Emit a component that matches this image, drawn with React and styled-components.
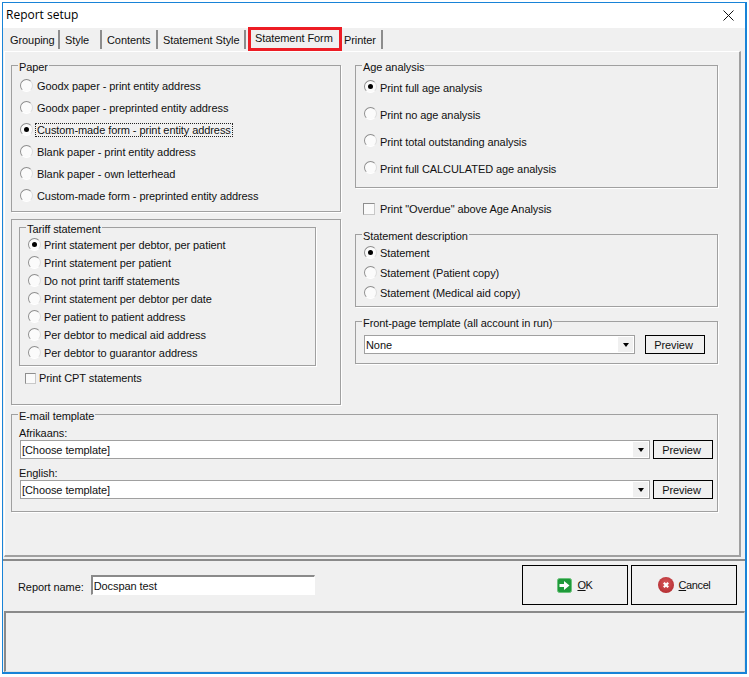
import styled, { createGlobalStyle } from "styled-components";

const GlobalStyle = createGlobalStyle`
  html, body {
    margin: 0;
    padding: 0;
    background: #fff;
  }
  body {
    font-family: "Liberation Sans", Arial, sans-serif;
    font-size: 11px;
    letter-spacing: -0.08px;
    color: #111;
  }
`;

const Window = styled.div`
  box-sizing: border-box;
  width: 745px;
  height: 672px;
  margin: 2px 0 0 2px;
  border: 1px solid #1883d7;
  border-right-width: 2px;
  border-bottom-width: 2px;
  background: #f0f0f0;
  display: flex;
  flex-direction: column;
`;

const TitleBar = styled.div`
  flex: none;
  height: 25px;
  background: #fff;
  display: flex;
  align-items: center;
  justify-content: space-between;
  padding: 0 11px 0 3px;
`;

const TitleText = styled.span`
  margin-top: -2px;
  font-family: "Open Sans", sans-serif;
  font-size: 12px;
  letter-spacing: 0;
  color: #000;
`;

const TabStrip = styled.div`
  flex: none;
  height: 23px;
  display: flex;
  align-items: flex-end;
  padding-left: 3px;
`;

const Tab = styled.div`
  box-sizing: border-box;
  width: ${(p) => p.$w}px;
  height: 19px;
  margin-bottom: 2px;
  padding: 1px 0 0 ${(p) => p.$pad}px;
  display: flex;
  align-items: center;
  border-right: 2px solid #8c8c8c;
  white-space: nowrap;
`;

const ActiveTab = styled.div`
  box-sizing: border-box;
  width: 94px;
  height: 24px;
  margin-left: 2px;
  border: 3px solid #ed1c24;
  padding: 0 0 3px 4px;
  display: flex;
  align-items: center;
  white-space: nowrap;
`;

const TabPanel = styled.div`
  box-sizing: border-box;
  flex: none;
  width: 737px;
  height: 506px;
  margin-left: 1px;
  border: 1px solid #fff;
  border-right: 2px solid #a0a0a0;
  border-bottom: 2px solid #a0a0a0;
  padding: 13px 0 0 6px;
  display: flex;
  flex-direction: column;
  gap: 9px;
`;

const Columns = styled.div`
  display: flex;
  gap: 14px;
`;

const Column = styled.div`
  width: ${(p) => p.$w}px;
  display: flex;
  flex-direction: column;
`;

const Group = styled.div`
  box-sizing: border-box;
  position: relative;
  width: ${(p) => p.$w || "100%"};
  height: ${(p) => p.$h}px;
  margin-top: ${(p) => p.$mt || 0}px;
  border: 1px solid #a0a0a0;
  box-shadow: 1px 1px 0 #fff;
  padding: ${(p) => p.$pt || 0}px 0 0 ${(p) => p.$pl || 8}px;
`;

const Legend = styled.div`
  position: absolute;
  top: -5px;
  left: 6px;
  padding: 0 1px;
  line-height: 13px;
  background: #f0f0f0;
  white-space: nowrap;
`;

const OptionRow = styled.div`
  height: ${(p) => p.$pitch}px;
  display: flex;
  align-items: center;
  gap: ${(p) => p.$gap}px;
  white-space: nowrap;
`;

const RadioMark = styled.span`
  box-sizing: border-box;
  flex: none;
  width: 13px;
  height: 13px;
  margin-top: -2px;
  border-radius: 50%;
  border: 1px solid;
  border-color: #8e8e8e #dcdcdc #fff #8e8e8e;
  background: #fbfbfb;
  display: flex;
  align-items: center;
  justify-content: center;
  &::after {
    content: "";
    display: ${(p) => (p.$on ? "block" : "none")};
    width: 5px;
    height: 5px;
    border-radius: 50%;
    background: #000;
  }
`;

const OptionText = styled.span`
  padding: 0 1px;
  line-height: 12px;
  outline: ${(p) => (p.$focus ? "1px dotted #222" : "none")};
`;

const CheckMark = styled.span`
  box-sizing: border-box;
  flex: none;
  width: ${(p) => p.$size}px;
  height: ${(p) => p.$size}px;
  border: 1px solid #8e8e8e;
  border-right-color: #c8c8c8;
  border-bottom-color: #c8c8c8;
  background: #fafafa;
`;

const CheckRow = styled.div`
  display: flex;
  align-items: center;
  gap: ${(p) => p.$gap}px;
  height: 14px;
  margin: ${(p) => p.$mt}px 0 0 ${(p) => p.$ml}px;
`;

const FieldLabel = styled.div`
  line-height: 13px;
  height: 13px;
  margin: ${(p) => p.$mt || 0}px 0 0 -1px;
`;

const ComboRow = styled.div`
  display: flex;
  align-items: center;
  gap: ${(p) => p.$gap}px;
`;

const Combo = styled.div`
  box-sizing: border-box;
  width: ${(p) => p.$w}px;
  height: 19px;
  border: 1px solid #a0a0a0;
  background: #fff;
  display: flex;
  align-items: center;
  justify-content: space-between;
  padding-left: 1px;
`;

const ComboArrow = styled.span`
  width: 15px;
  height: 15px;
  margin-right: 1px;
  background: #f0f0f0;
  display: flex;
  align-items: center;
  justify-content: center;
  &::after {
    content: "";
    border-style: solid;
    border-width: 4px 3.5px 0;
    border-color: #000 transparent transparent;
  }
`;

const SmallButton = styled.div`
  box-sizing: border-box;
  width: 60px;
  height: 19px;
  border: 1px solid #000;
  padding-right: 3px;
  display: flex;
  align-items: center;
  justify-content: center;
`;

const Footer = styled.div`
  box-sizing: border-box;
  flex: none;
  height: 52px;
  margin-top: 2px;
  border-top: 2px solid #8a8a8a;
  display: flex;
  align-items: center;
  padding: 0 8px 2px 15px;
`;

const NameLabel = styled.span`
  margin-top: 3px;
`;

const NameInput = styled.div`
  box-sizing: border-box;
  width: 224px;
  height: 20px;
  margin: 0 0 0 7px;
  border: 1px solid #fff;
  border-top: 2px solid #8a8a8a;
  border-left: 2px solid #8a8a8a;
  background: #fff;
  display: flex;
  align-items: center;
  padding-left: 1px;
`;

const FooterButtons = styled.div`
  margin-left: auto;
  display: flex;
  gap: 3px;
`;

const BigButton = styled.div`
  box-sizing: border-box;
  width: 106px;
  height: 40px;
  border: 1px solid #000;
  display: flex;
  align-items: center;
  justify-content: center;
  gap: 5px;
  letter-spacing: -0.4px;
  u {
    text-underline-offset: 1px;
  }
`;

const StatusPanel = styled.div`
  box-sizing: border-box;
  flex: 1;
  margin-left: 1px;
  border-top: 2px solid #8a8a8a;
  border-left: 2px solid #8a8a8a;
  border-right: 1px solid #e2e2e2;
  border-bottom: 1px solid #e2e2e2;
`;

const paperOptions = [
  "Goodx paper - print entity address",
  "Goodx paper - preprinted entity address",
  "Custom-made form - print entity address",
  "Blank paper - print entity address",
  "Blank paper - own letterhead",
  "Custom-made form - preprinted entity address",
];

const tariffOptions = [
  "Print statement per debtor, per patient",
  "Print statement per patient",
  "Do not print tariff statements",
  "Print statement per debtor per date",
  "Per patient to patient address",
  "Per debtor to medical aid address",
  "Per debtor to guarantor address",
];

const ageOptions = [
  "Print full age analysis",
  "Print no age analysis",
  "Print total outstanding analysis",
  "Print full CALCULATED age analysis",
];

const descOptions = ["Statement", "Statement (Patient copy)", "Statement (Medical aid copy)"];

function Options({ items, selected, pitch, gap = 2, focus }) {
  return items.map((text, i) => (
    <OptionRow $pitch={pitch} $gap={gap} key={text}>
      <RadioMark $on={i === selected} />
      <OptionText $focus={focus && i === selected}>{text}</OptionText>
    </OptionRow>
  ));
}

function CloseIcon() {
  return (
    <svg width="11" height="11" viewBox="0 0 11 11">
      <path d="M0.5 0.5L10.5 10.5M10.5 0.5L0.5 10.5" stroke="#111" strokeWidth="1" fill="none" />
    </svg>
  );
}

function OkIcon() {
  return (
    <svg width="15" height="15" viewBox="0 0 15 15">
      <rect x="0.5" y="0.5" width="14" height="14" rx="2" fill="#1f9a3a" stroke="#6cc27c" />
      <path d="M2.5 6H7V3L12.5 7.5L7 12V9H2.5Z" fill="#fff" />
    </svg>
  );
}

function CancelIcon() {
  return (
    <svg width="16" height="16" viewBox="0 0 16 16">
      <defs>
        <radialGradient id="cancelFill" cx="50%" cy="40%" r="60%">
          <stop offset="0%" stopColor="#d9595c" />
          <stop offset="100%" stopColor="#b52f33" />
        </radialGradient>
      </defs>
      <circle cx="8" cy="8" r="8" fill="url(#cancelFill)" />
      <path d="M5.8 5.8L10.2 10.2M10.2 5.8L5.8 10.2" stroke="#fff" strokeWidth="2.2" fill="none" />
    </svg>
  );
}

export default function App() {
  return (
    <>
      <GlobalStyle />
      <Window>
        <TitleBar>
          <TitleText>Report setup</TitleText>
          <CloseIcon />
        </TitleBar>
        <TabStrip>
          <Tab $w={54} $pad={4}>Grouping</Tab>
          <Tab $w={42} $pad={5}>Style</Tab>
          <Tab $w={56} $pad={5}>Contents</Tab>
          <Tab $w={88} $pad={5}>Statement Style</Tab>
          <ActiveTab>Statement Form</ActiveTab>
          <Tab $w={41} $pad={2}>Printer</Tab>
        </TabStrip>
        <TabPanel>
          <Columns>
            <Column $w={330}>
              <Group $h={147} $pt={9}>
                <Legend>Paper</Legend>
                <Options items={paperOptions} selected={2} pitch={22} gap={3} focus />
              </Group>
              <Group $h={186} $mt={7} $pt={7} $pl={7}>
                <Group $w="297px" $h={139} $pt={8} $pl={8}>
                  <Legend>Tariff statement</Legend>
                  <Options items={tariffOptions} selected={0} pitch={18} />
                </Group>
                <CheckRow $mt={5} $ml={6} $gap={3}>
                  <CheckMark $size={11} />
                  <span>Print CPT statements</span>
                </CheckRow>
              </Group>
            </Column>
            <Column $w={363}>
              <Group $h={123} $pt={8}>
                <Legend>Age analysis</Legend>
                <Options items={ageOptions} selected={0} pitch={27} />
              </Group>
              <CheckRow $mt={14} $ml={8} $gap={5}>
                <CheckMark $size={12} />
                <span>Print "Overdue" above Age Analysis</span>
              </CheckRow>
              <Group $h={73} $mt={18} $pt={8}>
                <Legend>Statement description</Legend>
                <Options items={descOptions} selected={0} pitch={20} />
              </Group>
              <Group $h={43} $mt={14} $pt={13}>
                <Legend>Front-page template (all account in run)</Legend>
                <ComboRow $gap={10}>
                  <Combo $w={271}>
                    None
                    <ComboArrow />
                  </Combo>
                  <SmallButton>Preview</SmallButton>
                </ComboRow>
              </Group>
            </Column>
          </Columns>
          <Group $w="707px" $h={98} $pt={12} $pl={8}>
            <Legend>E-mail template</Legend>
            <FieldLabel>Afrikaans:</FieldLabel>
            <ComboRow $gap={3}>
              <Combo $w={630}>
                [Choose template]
                <ComboArrow />
              </Combo>
              <SmallButton>Preview</SmallButton>
            </ComboRow>
            <FieldLabel $mt={8}>English:</FieldLabel>
            <ComboRow $gap={3}>
              <Combo $w={630}>
                [Choose template]
                <ComboArrow />
              </Combo>
              <SmallButton>Preview</SmallButton>
            </ComboRow>
          </Group>
        </TabPanel>
        <Footer>
          <NameLabel>Report name:</NameLabel>
          <NameInput>Docspan test</NameInput>
          <FooterButtons>
            <BigButton>
              <OkIcon />
              <span><u>O</u>K</span>
            </BigButton>
            <BigButton>
              <CancelIcon />
              <span><u>C</u>ancel</span>
            </BigButton>
          </FooterButtons>
        </Footer>
        <StatusPanel />
      </Window>
    </>
  );
}
